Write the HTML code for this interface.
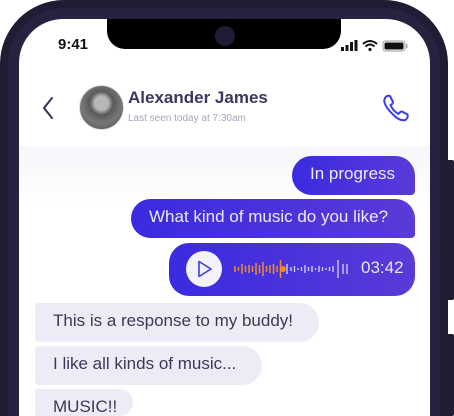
<!DOCTYPE html>
<html><head><style>
*{margin:0;padding:0;box-sizing:border-box}
html,body{width:454px;height:416px;overflow:hidden}
body{background:#fff;font-family:"Liberation Sans",sans-serif;position:relative}
.frame{position:absolute;left:0;top:0;width:448px;height:416px;background:#1f1c33;border-radius:64px 64px 0 0}
.frame2{position:absolute;left:8px;top:8px;width:432px;height:408px;background:#26223f;border-radius:56px 56px 0 0}
.btn{position:absolute;left:446px;width:8px;background:#1f1c33;border-radius:2px}
.screen{position:absolute;left:19px;top:19px;width:411px;height:397px;background:#fff;border-radius:44px 44px 0 0;overflow:hidden}
.notch{position:absolute;left:88px;top:0;width:234px;height:30px;background:#000;border-radius:0 0 18px 18px}
.cam{position:absolute;left:108px;top:7px;width:20px;height:20px;border-radius:50%;background:#1f1c33}
.time{position:absolute;left:39px;top:17px;font-weight:bold;font-size:15px;color:#111}
.chat{position:absolute;left:0;top:127px;width:411px;height:270px;background:linear-gradient(#f6f6fb,#fff 60px)}
.b{position:absolute;height:39px;border-radius:20px;font-size:17px;line-height:36px;padding-left:18px;white-space:nowrap;overflow:hidden}
.o{background:linear-gradient(90deg,#3a2be0,#5a3ad8);color:#ece9ff;border-radius:20px 20px 4px 20px}
.i{background:#edecf6;color:#3b3956;border-radius:4px 20px 20px 4px}
</style></head><body>
<div class="frame"></div><div class="frame2"></div>
<div class="btn" style="top:160px;height:140px"></div>
<div class="btn" style="top:334px;height:82px"></div>
<div class="screen">
<div class="notch"><div class="cam"></div></div>
<div class="time">9:41</div>
<svg style="position:absolute;left:322px;top:20px" width="80" height="14" viewBox="0 0 80 14">
<rect x="0" y="8" width="3" height="4" fill="#111"/><rect x="4.5" y="6" width="3" height="6" fill="#111"/><rect x="9" y="3" width="3" height="9" fill="#111"/><rect x="13.5" y="1" width="3" height="11" fill="#111"/>
<path d="M22 5 Q29 -1 36 5" stroke="#111" stroke-width="2" fill="none"/><path d="M24.5 7.5 Q29 3.5 33.5 7.5" stroke="#111" stroke-width="2" fill="none"/><circle cx="29" cy="10.5" r="1.6" fill="#111"/>
<rect x="42" y="2" width="22" height="10" rx="2.5" fill="none" stroke="#999" stroke-width="1"/><rect x="43.5" y="3.5" width="19" height="7" rx="1.5" fill="#111"/><rect x="65" y="5" width="1.5" height="4" fill="#aaa"/>
</svg>
<svg style="position:absolute;left:22px;top:77px" width="14" height="24" viewBox="0 0 14 24"><path d="M11 2 L3 12 L11 22" stroke="#34315a" stroke-width="2" fill="none" stroke-linecap="round"/></svg>
<div style="position:absolute;left:60px;top:66px;width:45px;height:45px;border-radius:50%;background:radial-gradient(circle at 50% 40%,#b8b8b8 0 20%,#5a5a5a 35%,#777 60%,#444);border:1px solid #ddd"></div>
<div style="position:absolute;left:109px;top:69px;font-size:17px;font-weight:bold;color:#3a3760">Alexander James</div>
<div style="position:absolute;left:109px;top:94px;font-size:10px;color:#a6a4bd">Last seen today at 7:30am</div>
<svg style="position:absolute;left:362px;top:74px" width="30" height="30" viewBox="0 0 30 30"><path d="M4 5 Q6 2 9 3 L12 9 Q12 11 9.5 12 Q12 18 17.5 21 Q19 18.5 21 18.5 L26.5 21.5 Q27.5 24.5 24.5 27 Q19 28.5 12.5 22 Q5 15 3.5 9.5 Q3 7 4 5Z" stroke="#3a3de8" stroke-width="2" fill="none" stroke-linejoin="round"/></svg>
<div class="chat"></div>
<div class="b o" style="left:273px;top:137px;width:123px">In progress</div>
<div class="b o" style="left:112px;top:180px;width:284px">What kind of music do you like?</div>
<div class="b o" style="left:150px;top:224px;width:246px;height:53px;border-radius:20px 20px 20px 20px"></div>
<div style="position:absolute;left:167px;top:232px;width:36px;height:36px;border-radius:50%;background:#f3f2fa"></div>
<svg style="position:absolute;left:178px;top:241px" width="16" height="18" viewBox="0 0 16 18"><path d="M2 1.5 L14 9 L2 16.5Z" stroke="#3a3de8" stroke-width="1.6" fill="none" stroke-linejoin="round"/></svg>
<svg style="position:absolute;left:214px;top:237px" width="120" height="26" viewBox="0 0 120 26">
<g stroke="#f08a2a" stroke-width="1.5">
<line x1="2" y1="10" x2="2" y2="16"/><line x1="5.5" y1="11" x2="5.5" y2="15"/><line x1="9" y1="8" x2="9" y2="18"/><line x1="12.5" y1="10" x2="12.5" y2="16"/><line x1="16" y1="9" x2="16" y2="17"/><line x1="19.5" y1="10" x2="19.5" y2="16"/><line x1="23" y1="7" x2="23" y2="19"/><line x1="26.5" y1="9" x2="26.5" y2="17"/><line x1="30" y1="6" x2="30" y2="20"/><line x1="33.5" y1="10" x2="33.5" y2="16"/><line x1="37" y1="9" x2="37" y2="17"/><line x1="40.5" y1="8" x2="40.5" y2="18"/><line x1="44" y1="10" x2="44" y2="16"/><line x1="47.5" y1="4" x2="47.5" y2="22"/></g>
<circle cx="50" cy="13" r="3" fill="#ff8a1a"/>
<g stroke="#d8d3ff" stroke-width="1.3">
<line x1="54" y1="8" x2="54" y2="18"/><line x1="58" y1="11" x2="58" y2="15"/><line x1="61.5" y1="10" x2="61.5" y2="16"/><line x1="65" y1="12" x2="65" y2="14"/><line x1="68.5" y1="11" x2="68.5" y2="15"/><line x1="72" y1="9" x2="72" y2="17"/><line x1="75.5" y1="11" x2="75.5" y2="15"/><line x1="79" y1="10" x2="79" y2="16"/><line x1="82.5" y1="12" x2="82.5" y2="14"/><line x1="86" y1="10" x2="86" y2="16"/><line x1="89.5" y1="11" x2="89.5" y2="15"/><line x1="93" y1="12" x2="93" y2="14"/><line x1="96.5" y1="11" x2="96.5" y2="15"/><line x1="100" y1="10" x2="100" y2="16"/><line x1="105" y1="4" x2="105" y2="22"/><line x1="110" y1="8" x2="110" y2="18"/><line x1="114" y1="8" x2="114" y2="18"/></g></svg>
<div style="position:absolute;left:342px;top:239px;font-size:17px;color:#e8e5ff">03:42</div>
<div class="b i" style="left:16px;top:284px;width:284px">This is a response to my buddy!</div>
<div class="b i" style="left:16px;top:327px;width:227px">I like all kinds of music...</div>
<div class="b i" style="left:16px;top:370px;width:98px;height:27px">MUSIC!!</div>
</div>
</body></html>
